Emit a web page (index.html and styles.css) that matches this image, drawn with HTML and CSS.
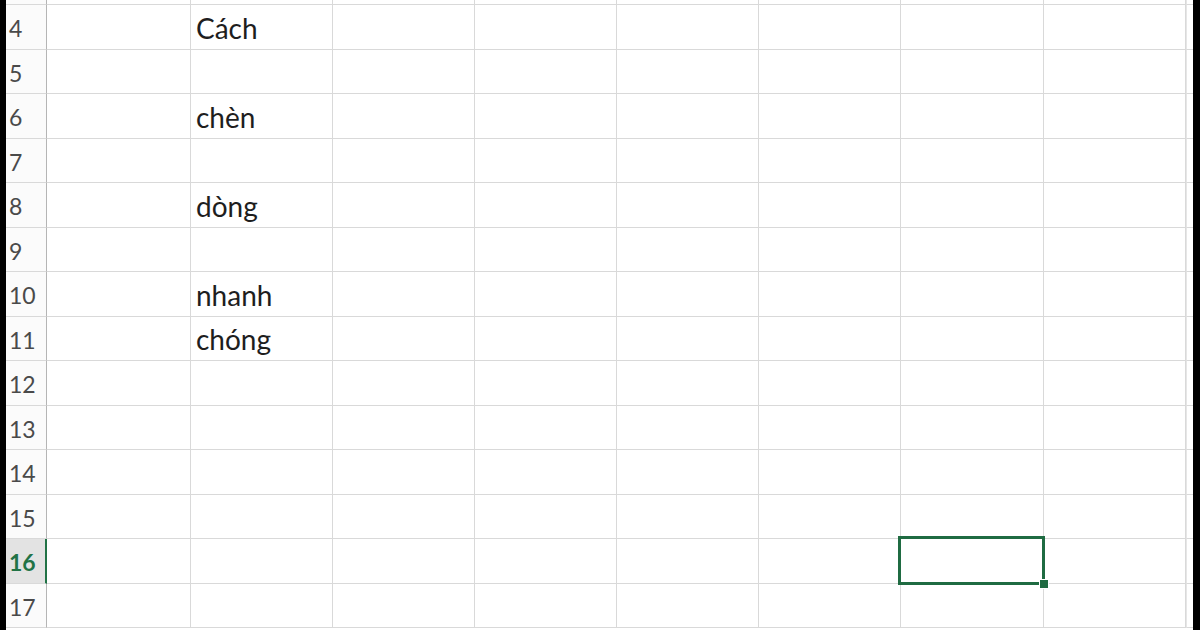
FILE: index.html
```html
<!DOCTYPE html>
<html>
<head>
<meta charset="utf-8">
<link rel="stylesheet" href="styles.css">
</head>
<body>
<div class="screen">
  <div class="sheet">
    <div class="rh top"></div><div class="c top"></div><div class="c top"></div><div class="c top"></div><div class="c top"></div><div class="c top"></div><div class="c top"></div><div class="c top"></div><div class="c top"></div><div class="c top last"></div>

    <div class="rh">4</div><div class="c"></div><div class="c t">Cách</div><div class="c"></div><div class="c"></div><div class="c"></div><div class="c"></div><div class="c"></div><div class="c"></div><div class="c last"></div>
    <div class="rh">5</div><div class="c"></div><div class="c"></div><div class="c"></div><div class="c"></div><div class="c"></div><div class="c"></div><div class="c"></div><div class="c"></div><div class="c last"></div>
    <div class="rh">6</div><div class="c"></div><div class="c t">chèn</div><div class="c"></div><div class="c"></div><div class="c"></div><div class="c"></div><div class="c"></div><div class="c"></div><div class="c last"></div>
    <div class="rh">7</div><div class="c"></div><div class="c"></div><div class="c"></div><div class="c"></div><div class="c"></div><div class="c"></div><div class="c"></div><div class="c"></div><div class="c last"></div>
    <div class="rh">8</div><div class="c"></div><div class="c t">dòng</div><div class="c"></div><div class="c"></div><div class="c"></div><div class="c"></div><div class="c"></div><div class="c"></div><div class="c last"></div>
    <div class="rh">9</div><div class="c"></div><div class="c"></div><div class="c"></div><div class="c"></div><div class="c"></div><div class="c"></div><div class="c"></div><div class="c"></div><div class="c last"></div>
    <div class="rh">10</div><div class="c"></div><div class="c t">nhanh</div><div class="c"></div><div class="c"></div><div class="c"></div><div class="c"></div><div class="c"></div><div class="c"></div><div class="c last"></div>
    <div class="rh">11</div><div class="c"></div><div class="c t">chóng</div><div class="c"></div><div class="c"></div><div class="c"></div><div class="c"></div><div class="c"></div><div class="c"></div><div class="c last"></div>
    <div class="rh">12</div><div class="c"></div><div class="c"></div><div class="c"></div><div class="c"></div><div class="c"></div><div class="c"></div><div class="c"></div><div class="c"></div><div class="c last"></div>
    <div class="rh">13</div><div class="c"></div><div class="c"></div><div class="c"></div><div class="c"></div><div class="c"></div><div class="c"></div><div class="c"></div><div class="c"></div><div class="c last"></div>
    <div class="rh">14</div><div class="c"></div><div class="c"></div><div class="c"></div><div class="c"></div><div class="c"></div><div class="c"></div><div class="c"></div><div class="c"></div><div class="c last"></div>
    <div class="rh">15</div><div class="c"></div><div class="c"></div><div class="c"></div><div class="c"></div><div class="c"></div><div class="c"></div><div class="c"></div><div class="c"></div><div class="c last"></div>
    <div class="rh active">16</div><div class="c"></div><div class="c"></div><div class="c"></div><div class="c"></div><div class="c"></div><div class="c"></div><div class="c sel"><span class="handle"></span></div><div class="c"></div><div class="c last"></div>
    <div class="rh">17</div><div class="c"></div><div class="c"></div><div class="c"></div><div class="c"></div><div class="c"></div><div class="c"></div><div class="c"></div><div class="c"></div><div class="c last"></div>
  </div>
</div>
</body>
</html>
```

FILE: styles.css
```css
html, body {
  margin: 0;
  padding: 0;
  background: #000;
}

.screen {
  width: 1200px;
  height: 630px;
  overflow: hidden;
  background: #000;
}

.sheet {
  box-sizing: border-box;
  width: 1200px;
  height: 630px;
  border-left: 6px solid #000;
  border-right: 7px solid #000;
  background: #fff;
  display: grid;
  grid-template-columns: 41px 144px 142px 142px 142px 142px 142px 143px 142px 7px;
  grid-template-rows: 5px repeat(14, 44.5px) 1fr;
  font-family: Lato, "Liberation Sans", sans-serif;
}

.rh,
.c {
  box-sizing: border-box;
  border-bottom: 1px solid #d9d9d9;
  border-right: 1px solid #d9d9d9;
  position: relative;
  min-width: 0;
}

.rh {
  background: #fbfbfb;
  border-right: 1px solid #b5b5b5;
  color: #4a4a4a;
  font-size: 23px;
  display: flex;
  align-items: center;
  padding: 3px 0 0 3px;
}

.rh.active {
  background: #e3e3e3;
  color: #217346;
  font-weight: 700;
  border-right: 2px solid #217346;
}

.c.last {
  border-right: none;
  border-left: 1px solid #e6e6e6;
}

.t {
  display: flex;
  align-items: center;
  padding: 2px 0 0 5px;
  font-size: 28px;
  color: #1e1e1e;
}

.sel::after {
  content: "";
  position: absolute;
  left: -3px;
  top: -3px;
  right: -2px;
  bottom: -2px;
  border: 3px solid #1f6b42;
  z-index: 1;
}

.handle {
  position: absolute;
  right: -6px;
  bottom: -6px;
  width: 8px;
  height: 8px;
  background: #1f6b42;
  border: 1px solid #fff;
  z-index: 2;
}
```
